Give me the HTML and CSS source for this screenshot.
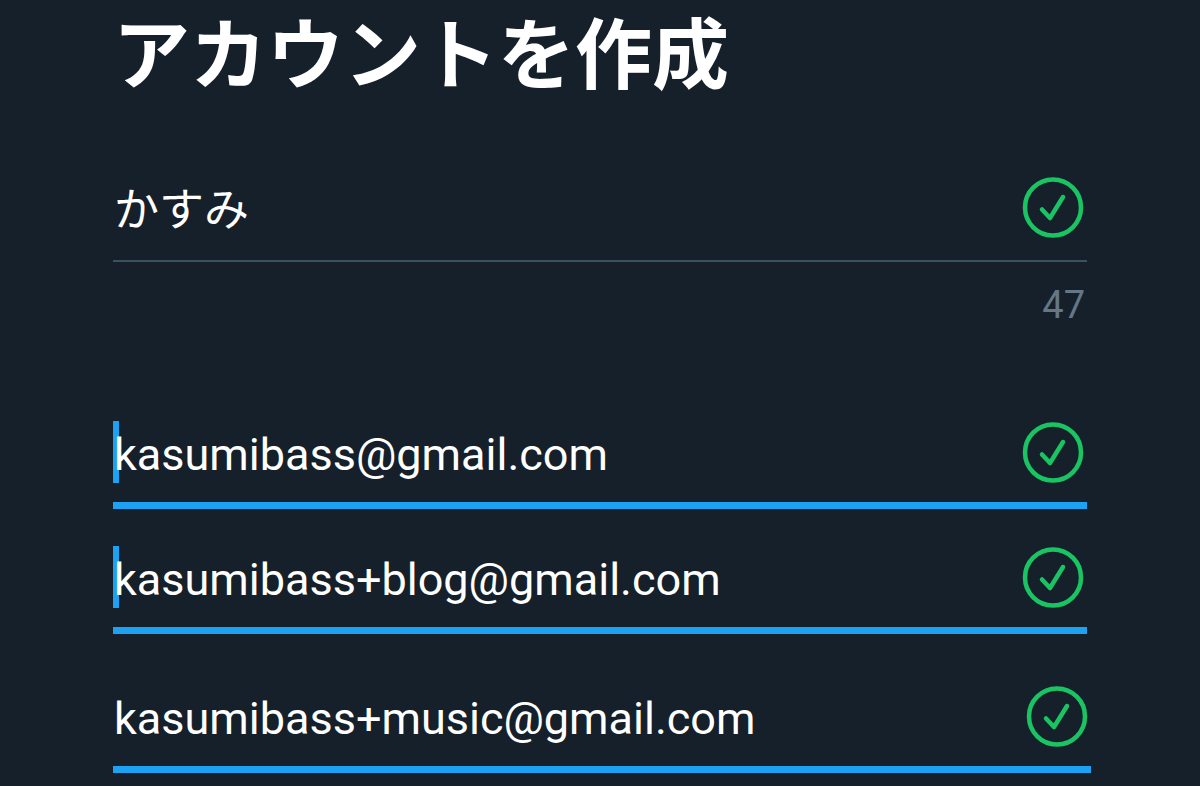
FILE: index.html
```html
<!DOCTYPE html>
<html lang="ja">
<head>
<meta charset="utf-8">
<title>アカウントを作成</title>
<link rel="stylesheet" href="styles.css">
</head>
<body>
<main class="signup">
  <h1 class="title">アカウントを作成</h1>
  <form class="form">
    <div class="field field-name">
      <input class="input input-name" type="text" aria-label="名前" value="かすみ">
      <svg class="check" viewBox="0 0 62 62" aria-hidden="true"><circle cx="31" cy="31.500" r="28"/><path d="M20 33.500l8 8.500L41 21"/></svg>
    </div>
    <output class="counter">47</output>
    <div class="field field-active">
      <span class="caret"></span>
      <input class="input input-email" type="email" aria-label="メール" value="kasumibass@gmail.com">
      <svg class="check" viewBox="0 0 62 62" aria-hidden="true"><circle cx="31" cy="31.500" r="28"/><path d="M20 33.500l8 8.500L41 21"/></svg>
    </div>
    <div class="field field-active">
      <span class="caret"></span>
      <input class="input input-email" type="email" aria-label="メール（ブログ）" value="kasumibass+blog@gmail.com">
      <svg class="check" viewBox="0 0 62 62" aria-hidden="true"><circle cx="31" cy="31.500" r="28"/><path d="M20 33.500l8 8.500L41 21"/></svg>
    </div>
    <div class="field field-active field-last">
      <input class="input input-email" type="email" aria-label="メール（音楽）" value="kasumibass+music@gmail.com">
      <svg class="check" viewBox="0 0 62 62" aria-hidden="true"><circle cx="31" cy="31.500" r="28"/><path d="M20 33.500l8 8.500L41 21"/></svg>
    </div>
  </form>
</main>
</body>
</html>
```
FILE: styles.css
```css
* {
  box-sizing: border-box;
}

body {
  margin: 0;
  background: #15202a;
  color: #fff;
  font-family: Roboto, "Noto Sans CJK JP", sans-serif;
}

.signup {
  padding: 0 113px;
}

.title {
  margin: 0;
  font-size: 77px;
  line-height: 114px;
  font-weight: 700;
}

.form {
  display: flex;
  flex-direction: column;
  padding-top: 62px;
}

.field {
  position: relative;
  display: flex;
  align-items: center;
  gap: 16px;
  padding-right: 3px;
}

.field-name {
  padding-bottom: 22px;
  border-bottom: 2px solid #3a5260;
}

.field-active {
  padding-bottom: 19px;
  border-bottom: 7px solid #1da1f2;
}

.field-active + .field-active {
  margin-top: 37px;
}

.field-active + .field-last {
  margin-top: 51px;
  margin-right: -4px;
}

.input {
  position: relative;
  flex: 1;
  min-width: 0;
  height: 62px;
  padding: 0 1px;
  border: 0;
  outline: 0;
  background: transparent;
  color: #fff;
  font: inherit;
  font-size: 45px;
}

.input-name {
  padding-bottom: 2px;
}

.input-email {
  padding-top: 4px;
}

.caret {
  position: absolute;
  left: 0;
  top: 0;
  width: 6px;
  height: 62px;
  background: #1da1f2;
}

.check {
  flex: none;
  width: 62px;
  height: 62px;
  fill: none;
  stroke: #1ac463;
  stroke-width: 4.5;
  stroke-linecap: round;
  stroke-linejoin: round;
}

.counter {
  align-self: flex-end;
  margin-bottom: 91px;
  padding: 18px 2px 0;
  color: #657786;
  font-size: 38px;
  line-height: 50px;
}
```
